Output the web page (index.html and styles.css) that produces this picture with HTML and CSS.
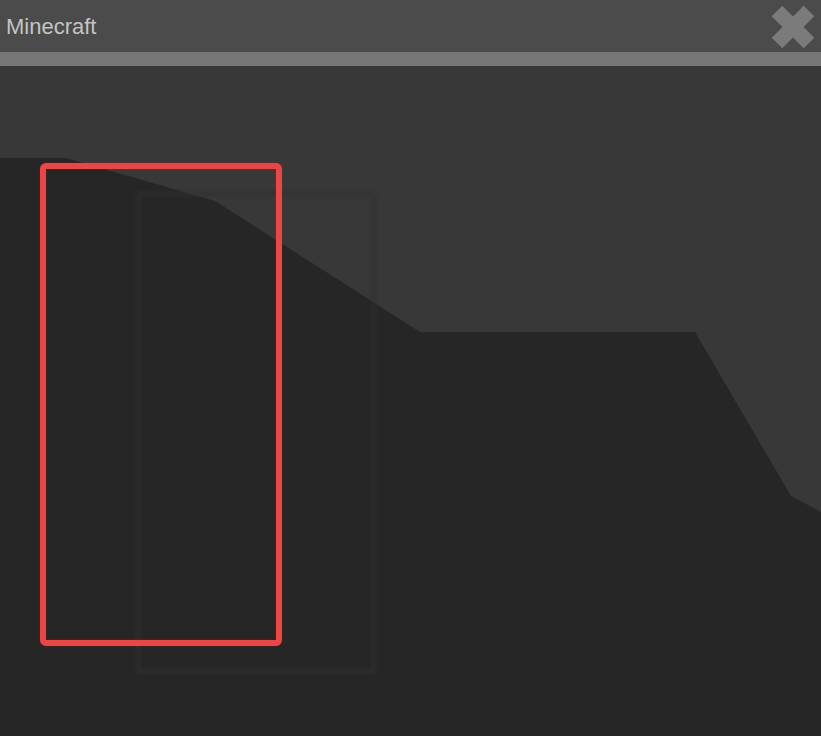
FILE: index.html
```html
<!DOCTYPE html>
<html lang="en">
<head>
    <meta charset="utf-8">
    <meta name="viewport" content="width=device-width, initial-scale=1.0">
    <title>Minecraft</title>
    <link rel="stylesheet" href="styles.css">
</head>
<body>
    <div class="window">
        <div class="titlebar">
            <span class="title">Minecraft</span>
            <button class="close" aria-label="close">
                <svg width="44" height="44" viewBox="0 0 44 44">
                    <path d="M6 6 L38 38 M38 6 L6 38" stroke="#7b7b7b" stroke-width="15"/>
                </svg>
            </button>
        </div>
        <div class="stripe"></div>
        <div class="scene">
            <svg class="terrain" width="821" height="670" viewBox="0 0 821 670" preserveAspectRatio="none">
                <polygon points="0,92 66,92 215,135 420,266 695,266 791,430 821,446 821,670 0,670" fill="#262626"/>
            </svg>
            <div class="ghost"></div>
            <div class="selection"></div>
        </div>
    </div>
</body>
</html>
```

FILE: styles.css
```css
* {
    box-sizing: border-box;
}

body {
    margin: 0;
    background-color: #262626;
    font-family: 'Liberation Sans', Arial, sans-serif;
    overflow: hidden;
}

.window {
    display: flex;
    flex-direction: column;
    width: 821px;
    height: 736px;
}

.titlebar {
    display: flex;
    justify-content: space-between;
    align-items: center;
    height: 52px;
    padding: 2px 6px 0 6px;
    background-color: #4b4b4b;
}

.title {
    color: #c4c4c4;
    font-size: 22px;
}

.close {
    display: flex;
    padding: 0;
    border: none;
    background: none;
    cursor: pointer;
}

.stripe {
    height: 14px;
    background-color: #777777;
}

.scene {
    position: relative;
    flex: 1;
    background-color: #383838;
    overflow: hidden;
}

.terrain {
    position: absolute;
    left: 0;
    top: 0;
}

.selection,
.ghost {
    position: absolute;
    width: 242px;
    height: 483px;
    border-radius: 6px;
}

.selection {
    left: 40px;
    top: 97px;
    border: 6px solid #ef4444;
    box-shadow: 0 0 1px rgba(239, 68, 68, 0.6), inset 0 0 1px rgba(239, 68, 68, 0.6);
}

.ghost {
    left: 135px;
    top: 125px;
    border: 6px solid rgba(50, 50, 50, 0.55);
    filter: blur(1.5px);
}
```
